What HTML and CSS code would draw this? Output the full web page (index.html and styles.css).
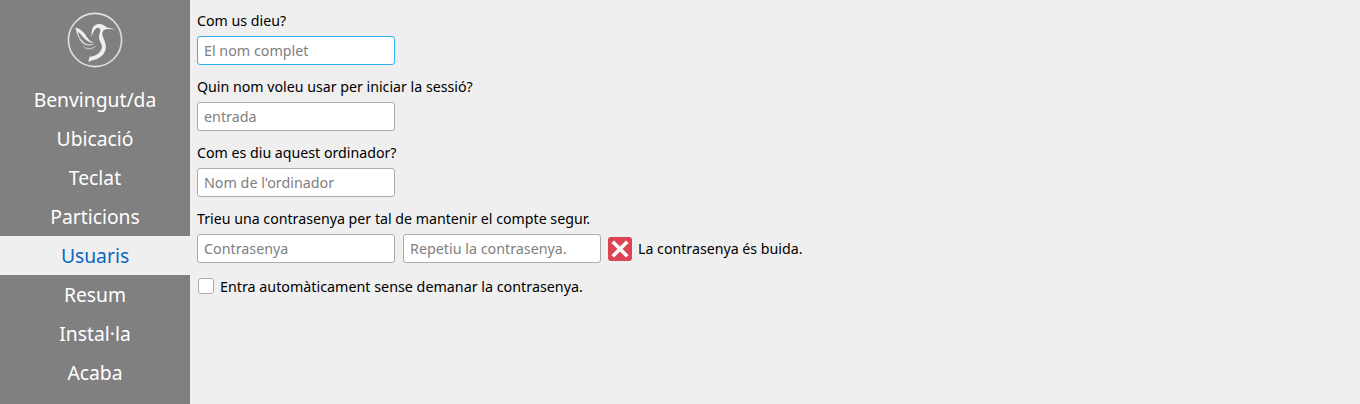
FILE: index.html
```html
<!DOCTYPE html>
<html lang="ca">
<head>
<meta charset="utf-8">
<title>Usuaris</title>
<link rel="stylesheet" href="styles.css">
</head>
<body>
<div class="app">
  <nav class="side">
    <div class="logo">
      <svg width="56" height="56" viewBox="0 0 56 56" fill="none">
        <circle cx="28" cy="28" r="26.6" stroke="#e0e0e0" stroke-width="1.600"/>
        <path d="M48.500 17.200 L40 15.600 C37 12 31 10.500 27.500 13.500 C25 15.500 24.500 20 24.500 25 C25.800 21 27.500 16.200 31 15.800 C34 15.500 33.500 19.500 32.500 22 C31.300 26 32.800 29 34.300 32 C35.800 35 34.500 38.500 32 41 C29.500 43.500 25.500 44.500 22.500 44.800 L21.300 50.300 C24 48 27 48.500 30 47 C35 44.800 38.500 41 38.800 35.500 C39 30.500 36.500 27 35.500 23.500 C34.800 20.500 36 17.200 40.500 17 Z" fill="#efefef"/>
        <path d="M8.500 15.500 C13 16.500 17 20 19.500 24.500 C21 27 23.500 29.500 27 31.300 C22 30.500 18.500 28 15.500 24.500 C13.500 22 12 20.500 11 20 C11.500 24 13.500 28 18 31 C14.500 30.500 11.500 26 10 21.500 C9.500 19.500 9 17.500 8.500 15.500 Z" fill="#ececec"/>
        <path d="M12 26.500 C15.500 31 20 33 28 32 C22 35 15 33.500 12 26.500 Z" fill="#d6d6d6"/>
        <path d="M15 33 C19 37 23 37 30 33.500 C25 38.500 19 39.500 15 33 Z" fill="#bdbdbd"/>
      </svg>
    </div>
    <a class="step">Benvingut/da</a>
    <a class="step">Ubicació</a>
    <a class="step">Teclat</a>
    <a class="step">Particions</a>
    <a class="step current">Usuaris</a>
    <a class="step">Resum</a>
    <a class="step">Instal·la</a>
    <a class="step">Acaba</a>
  </nav>
  <main class="form">
    <div class="group">
      <label class="label">Com us dieu?</label>
      <input class="field focus" type="text" placeholder="El nom complet">
    </div>
    <div class="group">
      <label class="label">Quin nom voleu usar per iniciar la sessió?</label>
      <input class="field" type="text" placeholder="entrada">
    </div>
    <div class="group">
      <label class="label">Com es diu aquest ordinador?</label>
      <input class="field" type="text" placeholder="Nom de l'ordinador">
    </div>
    <div class="group">
      <label class="label">Trieu una contrasenya per tal de mantenir el compte segur.</label>
      <div class="pw-row">
        <input class="field" type="text" placeholder="Contrasenya">
        <input class="field" type="text" placeholder="Repetiu la contrasenya.">
        <svg class="err" width="24" height="24" viewBox="0 0 24 24">
          <rect x="0" y="0" width="24" height="24" rx="3" fill="#da4453"/>
          <path d="M6 6 L18 18 M18 6 L6 18" stroke="#fcfcfc" stroke-width="3.600" stroke-linecap="square"/>
        </svg>
        <span class="msg">La contrasenya és buida.</span>
      </div>
    </div>
    <div class="check-row">
      <span class="box"></span>
      <span class="check-label">Entra automàticament sense demanar la contrasenya.</span>
    </div>
  </main>
</div>
</body>
</html>
```
FILE: styles.css
```css
* { box-sizing: border-box; }
html, body { margin: 0; height: 100%; }
body {
  background: #efefef;
  color: #000;
  font-family: "Noto Sans", "Open Sans", sans-serif;
  font-variant-ligatures: none;
  font-feature-settings: "locl" 0;
  overflow: hidden;
}
.app { display: flex; height: 404px; }
.side {
  width: 190px;
  flex: none;
  background: #808080;
  display: flex;
  flex-direction: column;
}
.logo {
  height: 80px;
  padding-top: 12px;
  display: flex;
  justify-content: center;
}
.step {
  height: 39px;
  display: flex;
  align-items: center;
  justify-content: center;
  color: #fff;
  font-size: 19.3px;
}
.step.current { background: #efefef; color: #0a66c2; }
.form { flex: 1; padding: 9px 7px 0; display: flex; flex-direction: column; }
.group { display: flex; flex-direction: column; height: 66px; }
.label {
  height: 27px;
  padding-bottom: 5px;
  display: flex;
  align-items: center;
  font-size: 14.2px;
  white-space: nowrap;
}
.field {
  width: 198px;
  height: 29px;
  padding: 0 6px;
  border: 1px solid #ababab;
  border-radius: 3px;
  background: #fff;
  font: inherit;
  font-size: 14.3px;
  color: #000;
  outline: none;
}
.field::placeholder { color: #808080; opacity: 1; }
.field.focus { border-color: #2eb1ee; }
.pw-row { display: flex; align-items: center; gap: 8px; }
.err { flex: none; margin-left: -1px; }
.msg { font-size: 14.2px; margin-left: -2px; white-space: nowrap; }
.check-row { display: flex; align-items: center; gap: 6px; padding-left: 1px; height: 26px; }
.box {
  width: 16px;
  height: 16px;
  background: #fff;
  border: 1px solid #ababab;
  border-radius: 3px;
}
.check-label { font-size: 14.3px; white-space: nowrap; }
```
